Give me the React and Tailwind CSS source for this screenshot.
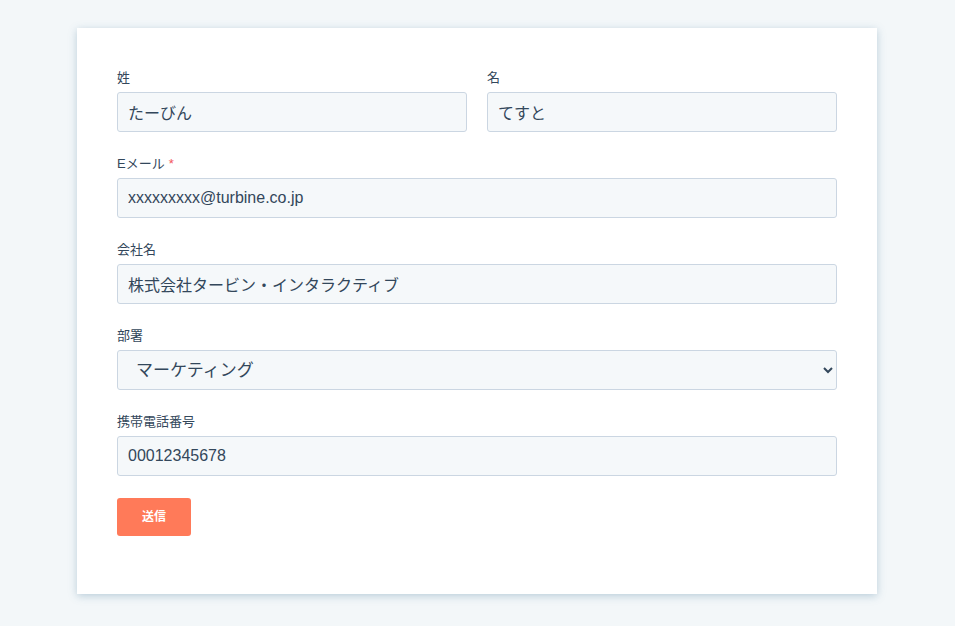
export default function App() {
  const font = { fontFamily: '"Liberation Sans","Noto Sans CJK JP",sans-serif' };
  const inputCls = "w-full h-10 rounded-[3px] border border-[#cbd6e2] bg-[#f5f8fa] px-[10px] text-[16px] text-[#33475b] outline-none";
  const Label = ({ children, req }) => (
    <div className="h-5 mb-1 text-[13px] leading-5 text-[#33475b]">
      {children}
      {req && <span className="text-[#f2545b] ml-1">*</span>}
    </div>
  );
  return (
    <div className="min-h-[626px] bg-[#f3f7f9] pt-[28px] pl-[77px]" style={font}>
      <div className="w-[800px] bg-white px-10 pt-10 pb-[58px] shadow-[0_2px_8px_rgba(80,130,160,0.35)]">
        <div className="flex gap-5">
          <div className="flex-1">
            <Label>姓</Label>
            <input className={inputCls} defaultValue="たーびん" />
          </div>
          <div className="flex-1">
            <Label>名</Label>
            <input className={inputCls} defaultValue="てすと" />
          </div>
        </div>
        <div className="mt-[22px]">
          <Label req>Eメール</Label>
          <input className={inputCls} defaultValue="xxxxxxxxx@turbine.co.jp" />
        </div>
        <div className="mt-[22px]">
          <Label>会社名</Label>
          <input className={inputCls} defaultValue="株式会社タービン・インタラクティブ" />
        </div>
        <div className="mt-[22px]">
          <Label>部署</Label>
          <select className={inputCls + " pl-[14px] text-[17px]"} defaultValue="m">
            <option value="m">マーケティング</option>
          </select>
        </div>
        <div className="mt-[22px]">
          <Label>携帯電話番号</Label>
          <input className={inputCls} defaultValue="00012345678" />
        </div>
        <button className="mt-[22px] h-[38px] w-[74px] rounded-[3px] bg-[#ff7a59] text-[12px] font-bold text-white">
          送信
        </button>
      </div>
    </div>
  );
}
